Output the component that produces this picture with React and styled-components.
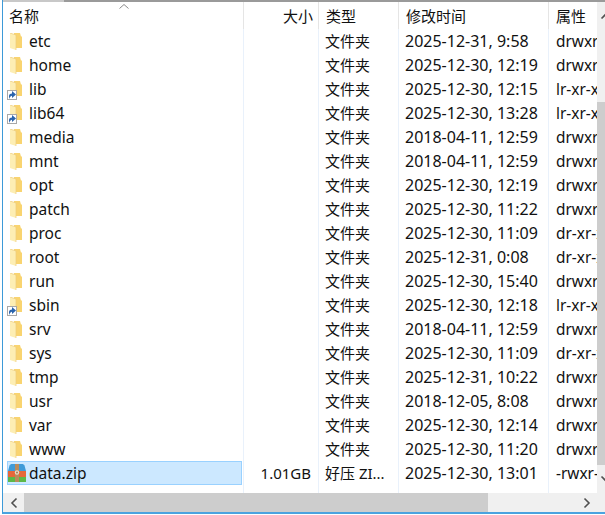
import React from 'react';
import styled, { createGlobalStyle } from 'styled-components';

const files = [
  { name: 'etc', date: '2025-12-31, 9:58', attr: 'drwxr' },
  { name: 'home', date: '2025-12-30, 12:19', attr: 'drwxr' },
  { name: 'lib', date: '2025-12-30, 12:15', attr: 'lr-xr-x', link: true },
  { name: 'lib64', date: '2025-12-30, 13:28', attr: 'lr-xr-x', link: true },
  { name: 'media', date: '2018-04-11, 12:59', attr: 'drwxr' },
  { name: 'mnt', date: '2018-04-11, 12:59', attr: 'drwxr' },
  { name: 'opt', date: '2025-12-30, 12:19', attr: 'drwxr' },
  { name: 'patch', date: '2025-12-30, 11:22', attr: 'drwxr' },
  { name: 'proc', date: '2025-12-30, 11:09', attr: 'dr-xr-x' },
  { name: 'root', date: '2025-12-31, 0:08', attr: 'dr-xr-x' },
  { name: 'run', date: '2025-12-30, 15:40', attr: 'drwxr' },
  { name: 'sbin', date: '2025-12-30, 12:18', attr: 'lr-xr-x', link: true },
  { name: 'srv', date: '2018-04-11, 12:59', attr: 'drwxr' },
  { name: 'sys', date: '2025-12-30, 11:09', attr: 'dr-xr-x' },
  { name: 'tmp', date: '2025-12-31, 10:22', attr: 'drwxr' },
  { name: 'usr', date: '2018-12-05, 8:08', attr: 'drwxr' },
  { name: 'var', date: '2025-12-30, 12:14', attr: 'drwxr' },
  { name: 'www', date: '2025-12-30, 11:20', attr: 'drwxr' },
];

function FolderIcon({ link }) {
  return (
    <IconBox>
      <svg width="12" height="17" viewBox="0 0 12 17">
        <path d="M4 0h6l1 3.500h1V15H4z" fill="#f9d470" />
        <path d="M0 0l6 2v15l-6-2z" fill="#fdeeb4" />
        <path d="M0 0l6 2v15" fill="none" stroke="#eccb7c" strokeWidth="0.7" />
      </svg>
      {link && (
        <LinkBadge>
          <svg width="8" height="8" viewBox="0 0 8 8">
            <path d="M1 8V5c0-1.600 1-2.600 3-2.600V0l4 3.400L4 7V4.800C3 4.800 2 5.800 1 8z" fill="#2a64ad" />
          </svg>
        </LinkBadge>
      )}
    </IconBox>
  );
}

function ZipIcon() {
  return (
    <ZipBox>
      <svg width="18" height="18" viewBox="0 0 18 18">
        <path d="M1.500 1.500C2 .5 3 0 4 0h10c1 0 2 .5 2.500 1.500L18 7H0z" fill="#3f9bd8" />
        <rect y="7" width="18" height="6" fill="#e5673a" />
        <rect y="13" width="18" height="5" fill="#5cb848" />
        <rect x="7" width="4" height="18" fill="#b98b5c" />
        <circle cx="9" cy="8.500" r="2.200" fill="#e9dcc8" />
        <circle cx="9" cy="8.500" r="0.900" fill="#9a6f46" />
      </svg>
    </ZipBox>
  );
}

export default function App() {
  return (
    <>
      <GlobalStyle />
      <Window>
        <TopEdge>
          <TopTab />
          <TopLine />
        </TopEdge>
        <Body>
          <Pane>
            <Header>
              <NameHead>
                名称
                <SortArrow width="10" height="5" viewBox="0 0 10 5">
                  <path d="M.5 4.500L5 .5l4.500 4" fill="none" stroke="#8a8a8a" strokeWidth="1" />
                </SortArrow>
              </NameHead>
              <SizeHead>大小</SizeHead>
              <HeadCell>类型</HeadCell>
              <HeadCell>修改时间</HeadCell>
              <HeadCell>属性</HeadCell>
            </Header>
            <List>
              {files.map((f) => (
                <Row key={f.name}>
                  <NameCell>
                    <FolderIcon link={f.link} />
                    {f.name}
                  </NameCell>
                  <SizeCell />
                  <TypeCell>文件夹</TypeCell>
                  <DateCell>{f.date}</DateCell>
                  <AttrCell>{f.attr}</AttrCell>
                </Row>
              ))}
              <Row>
                <NameCell $selected>
                  <ZipIcon />
                  data.zip
                </NameCell>
                <SizeCell>1.01GB</SizeCell>
                <TypeCell>好压 ZI...</TypeCell>
                <DateCell>2025-12-30, 13:01</DateCell>
                <AttrCell>-rwxr-</AttrCell>
              </Row>
              <FillRow>
                <span />
                <ColumnFill />
                <ColumnFill />
                <ColumnFill />
                <ColumnFill />
              </FillRow>
            </List>
          </Pane>
          <VScroll>
            <VButton>
              <svg width="12" height="8" viewBox="0 0 12 8">
                <path d="M1.500 6.500L6 2l4.500 4.500" fill="none" stroke="#505050" strokeWidth="1.600" />
              </svg>
            </VButton>
            <VSpacer />
            <VThumb />
            <VButton>
              <svg width="12" height="8" viewBox="0 0 12 8">
                <path d="M1.500 1.500L6 6l4.500-4.500" fill="none" stroke="#505050" strokeWidth="1.600" />
              </svg>
            </VButton>
          </VScroll>
        </Body>
        <HScroll>
          <ScrollBtn>
            <svg width="8" height="12" viewBox="0 0 8 12">
              <path d="M6.500 1.500L2 6l4.500 4.500" fill="none" stroke="#505050" strokeWidth="1.600" />
            </svg>
          </ScrollBtn>
          <HThumb />
          <HTrack />
          <ScrollBtn $end>
            <svg width="8" height="12" viewBox="0 0 8 12">
              <path d="M1.500 1.500L6 6l-4.500 4.500" fill="none" stroke="#505050" strokeWidth="1.600" />
            </svg>
          </ScrollBtn>
        </HScroll>
      </Window>
    </>
  );
}

const columns = '240px 75px 80px 150px 49px';

const GlobalStyle = createGlobalStyle`
  html, body {
    margin: 0;
    padding: 0;
    background: #fff;
    overflow: hidden;
  }
  body {
    font-family: "Noto Sans", "Noto Sans CJK SC", sans-serif;
    font-size: 15px;
    color: #111;
  }
`;

const Window = styled.div`
  width: 603px;
  height: 514px;
  margin-left: 2px;
  display: flex;
  flex-direction: column;
  overflow: hidden;
  border-left: 1px solid #3d9ad8;
  border-bottom: 2px solid #4aa3df;
  box-sizing: border-box;
`;

const TopEdge = styled.div`
  height: 2px;
  flex: none;
  display: flex;
`;

const TopTab = styled.div`
  width: 61px;
  background: #c8c8c8;
`;

const TopLine = styled.div`
  flex: 1;
  background: #9a9a9a;
`;

const Body = styled.div`
  flex: 1;
  min-height: 0;
  display: flex;
`;

const Pane = styled.div`
  width: 594px;
  flex: none;
  display: flex;
  flex-direction: column;
  overflow: hidden;
`;

const Header = styled.div`
  display: grid;
  grid-template-columns: ${columns};
  height: 27px;
  flex: none;
`;

const HeadCell = styled.div`
  display: flex;
  align-items: center;
  padding-left: 7px;
  border-left: 1px solid #e5e5e5;
  white-space: nowrap;
`;

const NameHead = styled(HeadCell)`
  border-left: none;
  padding-left: 6px;
  position: relative;
`;

const SizeHead = styled(HeadCell)`
  justify-content: flex-end;
  padding: 0 5px 0 0;
`;

const SortArrow = styled.svg`
  position: absolute;
  left: 116px;
  top: 2px;
`;

const List = styled.div`
  flex: 1;
  min-height: 0;
  display: flex;
  flex-direction: column;
`;

const Row = styled.div`
  display: grid;
  grid-template-columns: ${columns};
  height: 24px;
  flex: none;
`;

const FillRow = styled(Row)`
  flex: 1;
  height: auto;
`;

const ColumnFill = styled.div`
  border-left: 1px solid #e9f1fb;
`;

const NameCell = styled.div`
  margin-left: 4px;
  margin-right: 1px;
  display: flex;
  align-items: center;
  font-size: 15.500px;
  background: ${(p) => (p.$selected ? '#cce8ff' : 'transparent')};
  outline: ${(p) => (p.$selected ? '1px solid #99d1ff' : 'none')};
  outline-offset: -1px;
`;

const IconBox = styled.span`
  width: 19px;
  height: 17px;
  margin-left: 3px;
  flex: none;
  display: flex;
  position: relative;
`;

const ZipBox = styled.span`
  width: 21px;
  height: 18px;
  margin-left: 1px;
  flex: none;
  display: flex;
`;

const LinkBadge = styled.span`
  position: absolute;
  left: -3px;
  bottom: -2px;
  width: 8px;
  height: 8px;
  background: #fff;
  border: 1px solid #a8a8a8;
  display: flex;
`;

const BodyCell = styled.div`
  display: flex;
  align-items: center;
  border-left: 1px solid #e9f1fb;
  white-space: nowrap;
  overflow: hidden;
`;

const SizeCell = styled(BodyCell)`
  justify-content: flex-end;
  padding-right: 7px;
`;

const TypeCell = styled(BodyCell)`
  padding-left: 6px;
  padding-bottom: 2px;
`;

const DateCell = styled(BodyCell)`
  padding-left: 6px;
  font-size: 16px;
`;

const AttrCell = styled(BodyCell)`
  padding-left: 7px;
  font-size: 15.400px;
`;

const VScroll = styled.div`
  width: 8px;
  flex: none;
  overflow: hidden;
  display: flex;
  flex-direction: column;
  background: #f0f0f0;
`;

const VButton = styled.div`
  width: 17px;
  height: 28px;
  flex: none;
  display: flex;
  align-items: center;
  justify-content: center;
`;

const VSpacer = styled.div`
  height: 72px;
  flex: none;
`;

const VThumb = styled.div`
  flex: 1;
  background: #cdcdcd;
`;

const HScroll = styled.div`
  height: 19px;
  flex: none;
  display: flex;
  background: #f0f0f0;
`;

const ScrollBtn = styled.div`
  width: ${(p) => (p.$end ? '24px' : '21px')};
  margin-right: ${(p) => (p.$end ? '6px' : '0')};
  flex: none;
  display: flex;
  align-items: center;
  justify-content: center;
`;

const HThumb = styled.div`
  width: 464px;
  flex: none;
  background: #cdcdcd;
`;

const HTrack = styled.div`
  flex: 1;
`;
